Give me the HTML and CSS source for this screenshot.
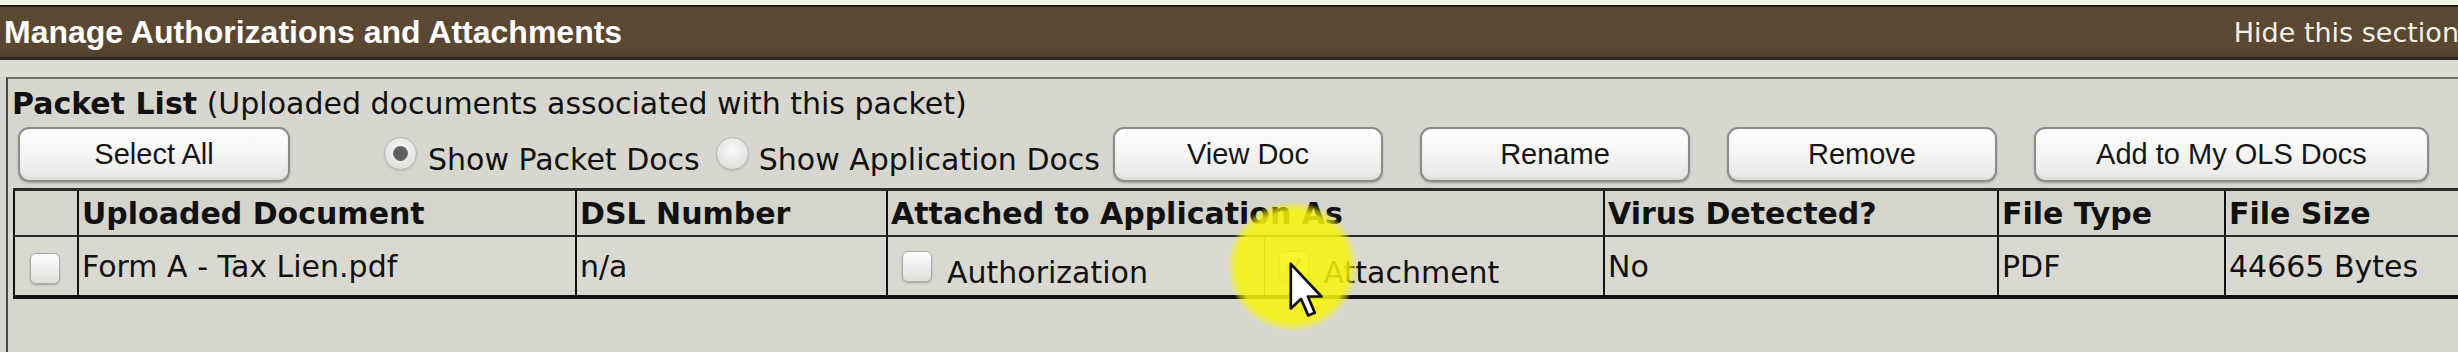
FILE: index.html
```html
<!DOCTYPE html>
<html>
<head>
<meta charset="utf-8">
<link rel="stylesheet" href="styles.css">
</head>
<body>
<div class="topstrip"></div>
<div class="sechead">
  <span class="title">Manage Authorizations and Attachments</span>
  <span class="hide">Hide this section</span>
</div>
<div class="band"></div>
<div class="box">
  <div class="packet-title"><b>Packet List</b> (Uploaded documents associated with this packet)</div>
  <div class="toolbar">
    <span class="btn btn-first">Select All</span>
    <span class="radio checked r1"></span><span class="rlabel l1">Show Packet Docs</span>
    <span class="radio r2"></span><span class="rlabel l2">Show Application Docs</span>
    <span class="btn btn-view">View Doc</span>
    <span class="btn">Rename</span>
    <span class="btn">Remove</span>
    <span class="btn btn-wide">Add to My OLS Docs</span>
  </div>
  <table class="grid">
    <colgroup>
      <col class="c-sel"><col class="c-doc"><col class="c-dsl"><col class="c-auth"><col class="c-att"><col class="c-virus"><col class="c-type"><col class="c-size">
    </colgroup>
    <thead>
      <tr>
        <th></th>
        <th>Uploaded Document</th>
        <th>DSL Number</th>
        <th colspan="2">Attached to Application As</th>
        <th>Virus Detected?</th>
        <th>File Type</th>
        <th>File Size</th>
      </tr>
    </thead>
    <tbody>
      <tr>
        <td class="selcell"><span class="cbox"></span></td>
        <td>Form A - Tax Lien.pdf</td>
        <td>n/a</td>
        <td class="optcell auth"><div class="opt"><span class="cbox"></span><span class="optlabel">Authorization</span></div></td>
        <td class="optcell att"><div class="opt"><span class="cbox checkedbox"><svg viewBox="0 0 30 30" width="28" height="28"><path d="M8 15 L13 21 L22 7" fill="none" stroke="#8a8a70" stroke-width="3"/></svg></span><span class="optlabel">Attachment</span></div></td>
        <td>No</td>
        <td>PDF</td>
        <td>44665 Bytes</td>
      </tr>
    </tbody>
  </table>
</div>
<div class="highlight"></div>
<svg class="cursor" viewBox="0 0 12 19" width="36" height="57">
  <path d="M0.6 0.6 L0.6 15.5 L4 12.3 L6.4 17.8 L8.6 16.9 L6.3 11.5 L10.8 11.5 Z" fill="#ffffff" stroke="#111111" stroke-width="0.9" stroke-linejoin="round"/>
</svg>
</body>
</html>
```

FILE: styles.css
```css
html, body {
  margin: 0;
  padding: 0;
}
body {
  width: 2458px;
  height: 352px;
  overflow: hidden;
  background: #d8d8d0;
  font-family: "DejaVu Sans", Verdana, sans-serif;
  color: #111;
  position: relative;
}
.topstrip {
  height: 5px;
  background: #f5f2e8;
}
.sechead {
  display: flex;
  align-items: center;
  height: 50px;
  background: linear-gradient(#5c4933, #5a4731 80%, #4e3f2d);
  border-top: 2px solid #1f1b16;
  border-bottom: 3px solid #2a2724;
  padding-left: 4px;
  overflow: hidden;
}
.title {
  font-family: "Liberation Sans", Arial, sans-serif;
  font-weight: bold;
  font-size: 32px;
  color: #ffffff;
  white-space: nowrap;
}
.hide {
  margin-left: auto;
  margin-right: -1px;
  font-size: 27px;
  color: #f2f0ea;
  white-space: nowrap;
}
.band {
  height: 17px;
  background: #dcdcd5;
}
.box {
  border-top: 2px solid #6e6e6a;
  border-left: 2px solid #4a4a48;
  margin-left: 6px;
  background: #d7d7cf;
  height: 273px;
  overflow: hidden;
}
.packet-title {
  padding: 8px 0 0 4px;
  font-size: 30px;
  line-height: 34px;
  white-space: nowrap;
}
.toolbar {
  display: flex;
  align-items: center;
  margin-top: 6px;
  height: 55px;
  white-space: nowrap;
}
.btn {
  box-sizing: border-box;
  display: flex;
  align-items: center;
  justify-content: center;
  width: 270px;
  height: 55px;
  margin-left: 37px;
  border: 2px solid #8c8c8a;
  border-radius: 11px;
  background: linear-gradient(#fefefe, #f6f6f5 45%, #e6e6e4);
  box-shadow: 0 1px 2px rgba(0, 0, 0, 0.25), inset 0 -2px 3px rgba(0, 0, 0, 0.06);
  font-family: "Liberation Sans", Arial, sans-serif;
  font-size: 29px;
  color: #151515;
}
.btn-first {
  margin-left: 10px;
  width: 272px;
}
.btn-view {
  margin-left: 13px;
}
.btn-wide {
  width: 395px;
}
.radio {
  box-sizing: border-box;
  width: 33px;
  height: 33px;
  border-radius: 50%;
  border: 1px solid #b8b8b4;
  background: radial-gradient(circle at 50% 40%, #fafafa, #e2e2df 70%, #d0d0cc);
  box-shadow: 0 1px 2px rgba(0, 0, 0, 0.15);
  display: flex;
  align-items: center;
  justify-content: center;
  margin-top: -2px;
}
.radio.checked::after {
  content: "";
  width: 15px;
  height: 15px;
  border-radius: 50%;
  background: radial-gradient(circle, #5e5e5e 50%, #7a7a7a);
}
.r1 {
  margin-left: 94px;
}
.r2 {
  margin-left: 16px;
}
.rlabel {
  font-size: 30px;
  padding-top: 10px;
}
.l1 {
  margin-left: 11px;
}
.l2 {
  margin-left: 10px;
}
.grid {
  margin-top: 6px;
  margin-left: 5px;
  border-collapse: collapse;
  table-layout: fixed;
  width: 2500px;
  font-size: 30px;
  white-space: nowrap;
}
.c-sel { width: 64px; }
.c-doc { width: 498px; }
.c-dsl { width: 311px; }
.c-auth { width: 377px; }
.c-att { width: 340px; }
.c-virus { width: 394px; }
.c-type { width: 227px; }
.c-size { width: 289px; }
.grid th {
  height: 44px;
  padding: 0 0 0 3px;
  text-align: left;
  font-weight: bold;
  border-top: 3px solid #2b2b2a;
  border-bottom: 2px solid #2a2a29;
  border-left: 2px solid #111;
  background: #d5d5cd;
  overflow: hidden;
}
.grid td {
  height: 58px;
  padding: 0 0 0 3px;
  border-left: 2px solid #111;
  border-bottom: 4px solid #111;
  background: #d9d9d1;
  overflow: hidden;
}
.grid td.selcell {
  padding-left: 15px;
}
.grid td.att {
  border-left: 1px solid #5a5a58;
}
.grid td.optcell {
  padding-left: 14px;
}
.opt {
  display: flex;
  align-items: center;
}
.optlabel {
  margin-left: 15px;
  padding-top: 12px;
}
.cbox {
  box-sizing: border-box;
  display: inline-flex;
  align-items: center;
  justify-content: center;
  width: 30px;
  height: 31px;
  border: 1px solid #aaaaa6;
  border-radius: 6px;
  background: linear-gradient(#fdfdfd, #ebebe9 60%, #dededb);
  box-shadow: 0 1px 2px rgba(0, 0, 0, 0.25);
  vertical-align: middle;
}
.highlight {
  position: absolute;
  left: 1227px;
  top: 201px;
  width: 131px;
  height: 131px;
  border-radius: 50%;
  background: radial-gradient(closest-side, rgba(248, 244, 10, 0.86) 84%, rgba(248, 244, 10, 0.45) 93%, rgba(248, 244, 10, 0) 100%);
}
.cursor {
  position: absolute;
  left: 1289px;
  top: 262px;
}
```
